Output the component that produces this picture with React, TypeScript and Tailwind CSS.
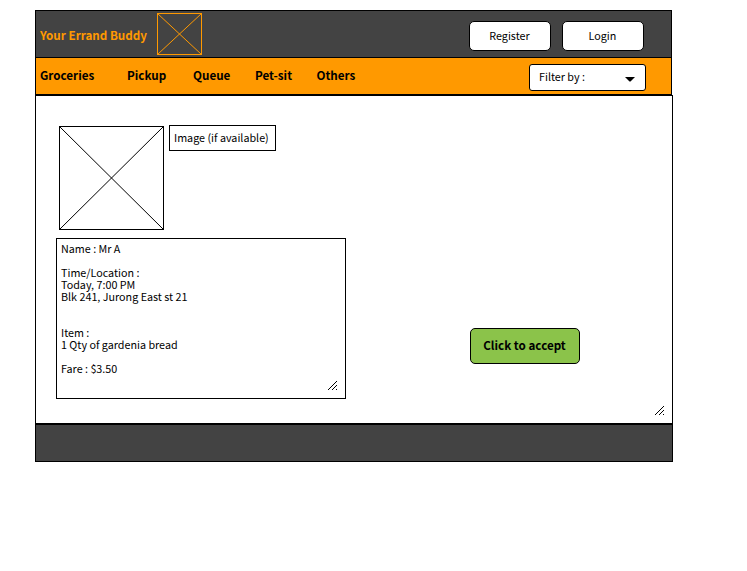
function CrossBox({ size, height, className }: { size: number; height: number; className: string }) {
  return (
    <svg width={size} height={height} className={className} fill="none" stroke="currentColor">
      <rect x="0.5" y="0.5" width={size - 1} height={height - 1} />
      <path d={`M0.5 0.5L${size - 0.5} ${height - 0.5}M${size - 0.5} 0.5L0.5 ${height - 0.5}`} />
    </svg>
  );
}

function ResizeGrip() {
  return (
    <svg width="10" height="10" className="block" fill="none" stroke="black" shapeRendering="crispEdges">
      <path d="M0.5 9.5L9.5 0.5M4.5 9.5L9.5 4.5M8.5 9.5L9.5 8.5" />
    </svg>
  );
}

const details = `Name : Mr A

Time/Location :
Today, 7:00 PM
Blk 241, Jurong East st 21


Item :
1 Qty of gardenia bread

Fare : $3.50`;

export default function App() {
  return (
    <div className="h-[571px] w-[747px] overflow-hidden bg-white pl-[35px] pt-[10px] font-['Noto_Sans_CJK_SC',sans-serif] text-[10.75px] leading-[12px] text-black">
      <header className="flex h-12 w-[637px] border border-black bg-[#434343]">
        <h1 className="mt-[18px] w-[121px] whitespace-nowrap pl-1 text-[11.65px] font-bold leading-[12px] text-[#ff9900]">Your Errand Buddy</h1>
        <CrossBox size={45} height={42} className="mt-[2px] shrink-0 text-[#ff9900]" />
        <div className="ml-auto mr-[27px] mt-[10px] flex gap-[11px]">
          <button className="h-[30px] w-[82px] rounded-[5px] border border-black bg-white pr-px">Register</button>
          <button className="h-[30px] w-[82px] rounded-[5px] border border-black bg-white pr-px">Login</button>
        </div>
      </header>
      <nav className="flex h-[37px] w-[637px] border-x border-b border-black bg-[#ff9900]">
        <div className="flex whitespace-nowrap pl-1 pt-[11px] text-[11.65px] font-bold leading-[12px]">
          <a className="w-[87px]">Groceries</a>
          <a className="w-[66px]">Pickup</a>
          <a className="w-[62px]">Queue</a>
          <a className="w-[61.5px]">Pet-sit</a>
          <a>Others</a>
        </div>
        <div className="ml-auto mr-[25px] mt-[6px] flex h-[27px] w-[117px] items-center justify-between rounded-[3px] border border-black bg-white pl-[9px] pr-[10px]">
          <span className="pb-px">Filter by :</span>
          <svg width="10" height="5" className="mt-1">
            <path d="M0 0H10L5.5 4.5H4.5Z" />
          </svg>
        </div>
      </nav>
      <main className="flex h-[329px] w-[638px] border border-black bg-white">
        <section className="w-[310px] pl-5 pt-[29px]">
          <div className="flex gap-[5px] pl-[3px]">
            <CrossBox size={105} height={104} className="mt-px shrink-0" />
            <p className="h-[26px] w-[107px] whitespace-nowrap border border-black pl-1 pt-[6px]">Image (if available)</p>
          </div>
          <div className="mt-2 flex h-[161px] w-[290px] items-end justify-between border border-black pr-2">
            <p className="h-full whitespace-pre pl-1 pt-1">{details}</p>
            <div className="mb-[7px]"><ResizeGrip /></div>
          </div>
        </section>
        <section className="flex flex-1 items-end justify-between pl-[124px] pr-2">
          <button className="mb-[59px] h-9 w-[110px] rounded-[5px] border border-black bg-[#8bc34a] pb-[2px] pr-px text-[11.65px] font-bold leading-[12px]">Click to accept</button>
          <div className="mb-[7px]"><ResizeGrip /></div>
        </section>
      </main>
      <footer className="h-[38px] w-[638px] border border-black bg-[#434343]" />
    </div>
  );
}
